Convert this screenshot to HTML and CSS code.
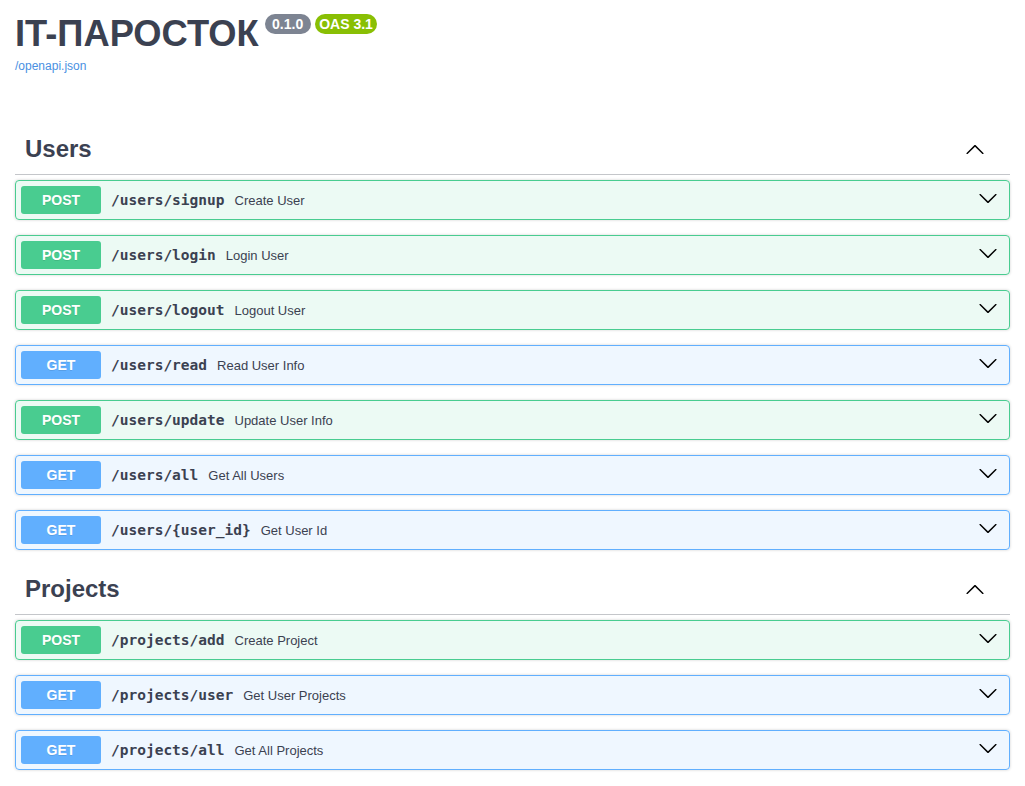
FILE: index.html
```html
<!DOCTYPE html>
<html lang="ru">
<head>
<meta charset="utf-8">
<title>IT-ПАРОСТОК</title>
<link rel="stylesheet" href="styles.css">
</head>
<body>
<div class="wrapper">
  <div class="info">
    <div class="title-row">
      <h2 class="title">IT-ПАРОСТОК</h2>
      <span class="badge badge-version">0.1.0</span>
      <span class="badge badge-oas">OAS 3.1</span>
    </div>
    <a class="link" href="#">/openapi.json</a>
  </div>

  <section class="tag-section">
    <div class="tag">
      <h3 class="tag-name">Users</h3>
      <svg class="arrow" width="20" height="20" viewBox="0 0 20 20"><path d="M17.418 14.908c.272.268.709.268.979 0s.271-.701 0-.969l-7.908-7.83c-.27-.268-.707-.268-.979 0l-7.908 7.83c-.27.268-.27.701 0 .969.271.268.709.268.979 0L10 7.767l7.418 7.141z"/></svg>
    </div>
    <div class="op post"><span class="method">POST</span><span class="path">/users/signup</span><span class="desc">Create User</span><svg class="arrow" width="20" height="20" viewBox="0 0 20 20"><path d="M17.418 6.109c.272-.268.709-.268.979 0s.271.701 0 .969l-7.908 7.83c-.27.268-.707.268-.979 0l-7.908-7.83c-.27-.268-.27-.701 0-.969.271-.268.709-.268.979 0L10 13.25l7.418-7.141z"/></svg></div>
    <div class="op post"><span class="method">POST</span><span class="path">/users/login</span><span class="desc">Login User</span><svg class="arrow" width="20" height="20" viewBox="0 0 20 20"><path d="M17.418 6.109c.272-.268.709-.268.979 0s.271.701 0 .969l-7.908 7.83c-.27.268-.707.268-.979 0l-7.908-7.83c-.27-.268-.27-.701 0-.969.271-.268.709-.268.979 0L10 13.25l7.418-7.141z"/></svg></div>
    <div class="op post"><span class="method">POST</span><span class="path">/users/logout</span><span class="desc">Logout User</span><svg class="arrow" width="20" height="20" viewBox="0 0 20 20"><path d="M17.418 6.109c.272-.268.709-.268.979 0s.271.701 0 .969l-7.908 7.83c-.27.268-.707.268-.979 0l-7.908-7.83c-.27-.268-.27-.701 0-.969.271-.268.709-.268.979 0L10 13.25l7.418-7.141z"/></svg></div>
    <div class="op get"><span class="method">GET</span><span class="path">/users/read</span><span class="desc">Read User Info</span><svg class="arrow" width="20" height="20" viewBox="0 0 20 20"><path d="M17.418 6.109c.272-.268.709-.268.979 0s.271.701 0 .969l-7.908 7.83c-.27.268-.707.268-.979 0l-7.908-7.83c-.27-.268-.27-.701 0-.969.271-.268.709-.268.979 0L10 13.25l7.418-7.141z"/></svg></div>
    <div class="op post"><span class="method">POST</span><span class="path">/users/update</span><span class="desc">Update User Info</span><svg class="arrow" width="20" height="20" viewBox="0 0 20 20"><path d="M17.418 6.109c.272-.268.709-.268.979 0s.271.701 0 .969l-7.908 7.83c-.27.268-.707.268-.979 0l-7.908-7.83c-.27-.268-.27-.701 0-.969.271-.268.709-.268.979 0L10 13.25l7.418-7.141z"/></svg></div>
    <div class="op get"><span class="method">GET</span><span class="path">/users/all</span><span class="desc">Get All Users</span><svg class="arrow" width="20" height="20" viewBox="0 0 20 20"><path d="M17.418 6.109c.272-.268.709-.268.979 0s.271.701 0 .969l-7.908 7.83c-.27.268-.707.268-.979 0l-7.908-7.83c-.27-.268-.27-.701 0-.969.271-.268.709-.268.979 0L10 13.25l7.418-7.141z"/></svg></div>
    <div class="op get"><span class="method">GET</span><span class="path">/users/{user_id}</span><span class="desc">Get User Id</span><svg class="arrow" width="20" height="20" viewBox="0 0 20 20"><path d="M17.418 6.109c.272-.268.709-.268.979 0s.271.701 0 .969l-7.908 7.83c-.27.268-.707.268-.979 0l-7.908-7.83c-.27-.268-.27-.701 0-.969.271-.268.709-.268.979 0L10 13.25l7.418-7.141z"/></svg></div>
  </section>

  <section class="tag-section">
    <div class="tag">
      <h3 class="tag-name">Projects</h3>
      <svg class="arrow" width="20" height="20" viewBox="0 0 20 20"><path d="M17.418 14.908c.272.268.709.268.979 0s.271-.701 0-.969l-7.908-7.83c-.27-.268-.707-.268-.979 0l-7.908 7.83c-.27.268-.27.701 0 .969.271.268.709.268.979 0L10 7.767l7.418 7.141z"/></svg>
    </div>
    <div class="op post"><span class="method">POST</span><span class="path">/projects/add</span><span class="desc">Create Project</span><svg class="arrow" width="20" height="20" viewBox="0 0 20 20"><path d="M17.418 6.109c.272-.268.709-.268.979 0s.271.701 0 .969l-7.908 7.83c-.27.268-.707.268-.979 0l-7.908-7.83c-.27-.268-.27-.701 0-.969.271-.268.709-.268.979 0L10 13.25l7.418-7.141z"/></svg></div>
    <div class="op get"><span class="method">GET</span><span class="path">/projects/user</span><span class="desc">Get User Projects</span><svg class="arrow" width="20" height="20" viewBox="0 0 20 20"><path d="M17.418 6.109c.272-.268.709-.268.979 0s.271.701 0 .969l-7.908 7.83c-.27.268-.707.268-.979 0l-7.908-7.83c-.27-.268-.27-.701 0-.969.271-.268.709-.268.979 0L10 13.25l7.418-7.141z"/></svg></div>
    <div class="op get"><span class="method">GET</span><span class="path">/projects/all</span><span class="desc">Get All Projects</span><svg class="arrow" width="20" height="20" viewBox="0 0 20 20"><path d="M17.418 6.109c.272-.268.709-.268.979 0s.271.701 0 .969l-7.908 7.83c-.27.268-.707.268-.979 0l-7.908-7.83c-.27-.268-.27-.701 0-.969.271-.268.709-.268.979 0L10 13.25l7.418-7.141z"/></svg></div>
  </section>
</div>
</body>
</html>
```
FILE: styles.css
```css
html, body {
  margin: 0;
  padding: 0;
  background: #fff;
}
body {
  font-family: "Liberation Sans", Arial, sans-serif;
  color: #3b4151;
}
.wrapper {
  padding: 0 15px 20px;
}
.info {
  padding-top: 13px;
  margin-bottom: 51px;
}
.title-row {
  display: flex;
  align-items: flex-start;
}
.title {
  margin: 0;
  font-size: 36.3px;
  line-height: 42px;
  font-weight: 700;
  color: #3b4151;
}
.badge {
  display: inline-block;
  margin-top: 1px;
  padding: 2px 6px;
  border-radius: 57px;
  font-size: 14px;
  line-height: 16px;
  font-weight: 700;
  color: #fff;
}
.badge-version {
  background: #7d8492;
  margin-left: 6px;
  padding: 2px 7.5px;
}
.badge-oas {
  background: #89bf04;
  margin-left: 4px;
  padding: 2px 4.5px;
}
.link {
  display: block;
  margin-top: 4px;
  font-size: 12px;
  line-height: 14px;
  color: #4990e2;
  text-decoration: none;
}
.tag-section {
  display: flex;
  flex-direction: column;
}
.tag {
  display: flex;
  align-items: center;
  padding: 10px 25px 10px 10px;
  border-bottom: 1px solid rgba(59, 65, 81, 0.3);
  margin-bottom: 5px;
}
.tag-name {
  flex: 1;
  margin: 0;
  font-size: 24px;
  line-height: 30px;
  font-weight: 700;
  color: #3b4151;
}
.tag .arrow {
  fill: #000;
}
.op {
  display: flex;
  align-items: center;
  padding: 5px;
  margin-bottom: 15px;
  border: 1px solid;
  border-radius: 4px;
  box-shadow: 0 0 3px rgba(0, 0, 0, 0.19);
}
.op:last-child {
  margin-bottom: 14px;
}
.op.post {
  border-color: #49cc90;
  background: rgba(73, 204, 144, 0.1);
}
.op.get {
  border-color: #61affe;
  background: rgba(97, 175, 254, 0.1);
}
.method {
  min-width: 80px;
  padding: 6px 0;
  border-radius: 3px;
  text-align: center;
  font-size: 14px;
  line-height: 16px;
  font-weight: 700;
  color: #fff;
  text-shadow: 0 1px 0 rgba(0, 0, 0, 0.1);
}
.post .method {
  background: #49cc90;
}
.get .method {
  background: #61affe;
}
.path {
  padding: 0 10px;
  font-family: "DejaVu Sans Mono", monospace;
  font-size: 14.5px;
  font-weight: 700;
  color: #3b4151;
}
.desc {
  flex: 1;
  font-size: 13px;
  color: #3b4151;
}
.op .arrow {
  margin-right: 6px;
  margin-bottom: 5px;
  fill: #000;
}
```
